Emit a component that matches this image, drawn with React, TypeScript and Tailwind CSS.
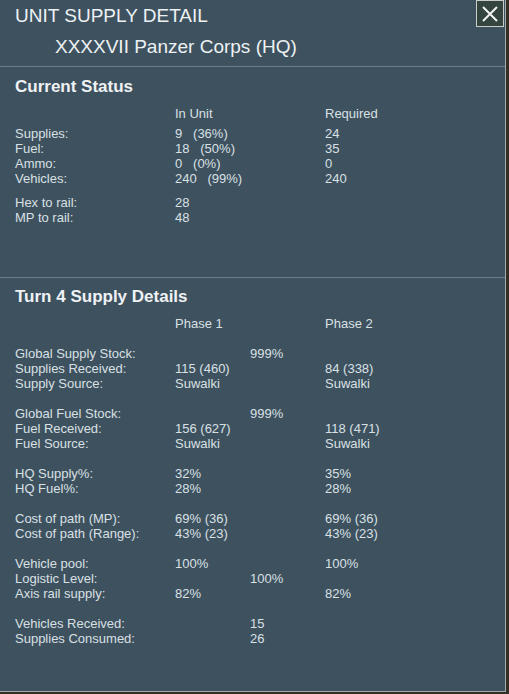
import React from 'react';

type Row = [string, string, string, string] | null;

// current status rows: label, in unit, (mid), required
const statusRows: [string, string, string][] = [
    ['Supplies:', '9   (36%)', '24'],
    ['Fuel:', '18   (50%)', '35'],
    ['Ammo:', '0   (0%)', '0'],
    ['Vehicles:', '240   (99%)', '240'],
];

const turnRows: Row[] = [
    ['Global Supply Stock:', '', '999%', ''],
    ['Supplies Received:', '115 (460)', '', '84 (338)'],
    ['Supply Source:', 'Suwalki', '', 'Suwalki'],
    null,
    ['Global Fuel Stock:', '', '999%', ''],
    ['Fuel Received:', '156 (627)', '', '118 (471)'],
    ['Fuel Source:', 'Suwalki', '', 'Suwalki'],
    null,
    ['HQ Supply%:', '32%', '', '35%'],
    ['HQ Fuel%:', '28%', '', '28%'],
    null,
    ['Cost of path (MP):', '69% (36)', '', '69% (36)'],
    ['Cost of path (Range):', '43% (23)', '', '43% (23)'],
    null,
    ['Vehicle pool:', '100%', '', '100%'],
    ['Logistic Level:', '', '100%', ''],
    ['Axis rail supply:', '82%', '', '82%'],
    null,
    ['Vehicles Received:', '', '15', ''],
    ['Supplies Consumed:', '', '26', ''],
];

const grid = 'grid grid-cols-[160px_75px_75px_1fr] px-[15px] text-[13px] leading-[15px] text-[#d9e0e4] whitespace-pre';

const GridRow: React.FC<{ cells: string[] }> = ({ cells }) => (
    <>
        {cells.map((c, i) => (
            <div key={i} className="h-[15px]">{c}</div>
        ))}
    </>
);

const App: React.FC = () => {
    return (
        <div className="w-[509px] h-[694px] bg-[#322f26] font-['Liberation_Sans',Arial,sans-serif] overflow-hidden">
            <div className="w-[506px] h-[692px] bg-[#3e515f] border-r border-b border-[#a3abab] flex flex-col">
                {/* header */}
                <div className="h-[66px] flex items-start justify-between">
                    <div className="pt-[5px] text-[19px] leading-[22px] text-[#edf1f3]">
                        <div className="pl-[15px]">UNIT SUPPLY DETAIL</div>
                        <div className="pl-[55px] mt-[9px]">XXXXVII Panzer Corps (HQ)</div>
                    </div>
                    <button className="w-[28px] h-[27px] mr-[1px] bg-[#34453f] border border-[#c9cdc9] flex items-center justify-center">
                        <svg width="18" height="18" viewBox="0 0 18 18">
                            <path d="M2 2 L16 16 M16 2 L2 16" stroke="#f2f4f2" strokeWidth="2" />
                        </svg>
                    </button>
                </div>

                {/* current status */}
                <div className="h-[211px] border-t border-[#6b7f8b]">
                    <div className="pt-[10px] px-[15px] text-[17px] leading-[20px] font-bold text-[#eef2f4]">Current Status</div>
                    <div className={grid + ' mt-[9px]'}>
                        <GridRow cells={['', 'In Unit', '', 'Required']} />
                    </div>
                    <div className={grid + ' mt-[5px]'}>
                        {statusRows.map((r, i) => (
                            <GridRow key={i} cells={[r[0], r[1], '', r[2]]} />
                        ))}
                    </div>
                    <div className={grid + ' mt-[9px]'}>
                        <GridRow cells={['Hex to rail:', '28', '', '']} />
                        <GridRow cells={['MP to rail:', '48', '', '']} />
                    </div>
                </div>

                {/* turn supply details */}
                <div className="flex-1 border-t border-[#6b7f8b]">
                    <div className="pt-[9px] px-[15px] text-[17px] leading-[20px] font-bold text-[#eef2f4]">Turn 4 Supply Details</div>
                    <div className={grid + ' mt-[9px]'}>
                        <GridRow cells={['', 'Phase 1', '', 'Phase 2']} />
                        <GridRow cells={['', '', '', '']} />
                        {turnRows.map((r, i) => (
                            <GridRow key={i} cells={r ?? ['', '', '', '']} />
                        ))}
                    </div>
                </div>
            </div>
        </div>
    );
};

export default App;
